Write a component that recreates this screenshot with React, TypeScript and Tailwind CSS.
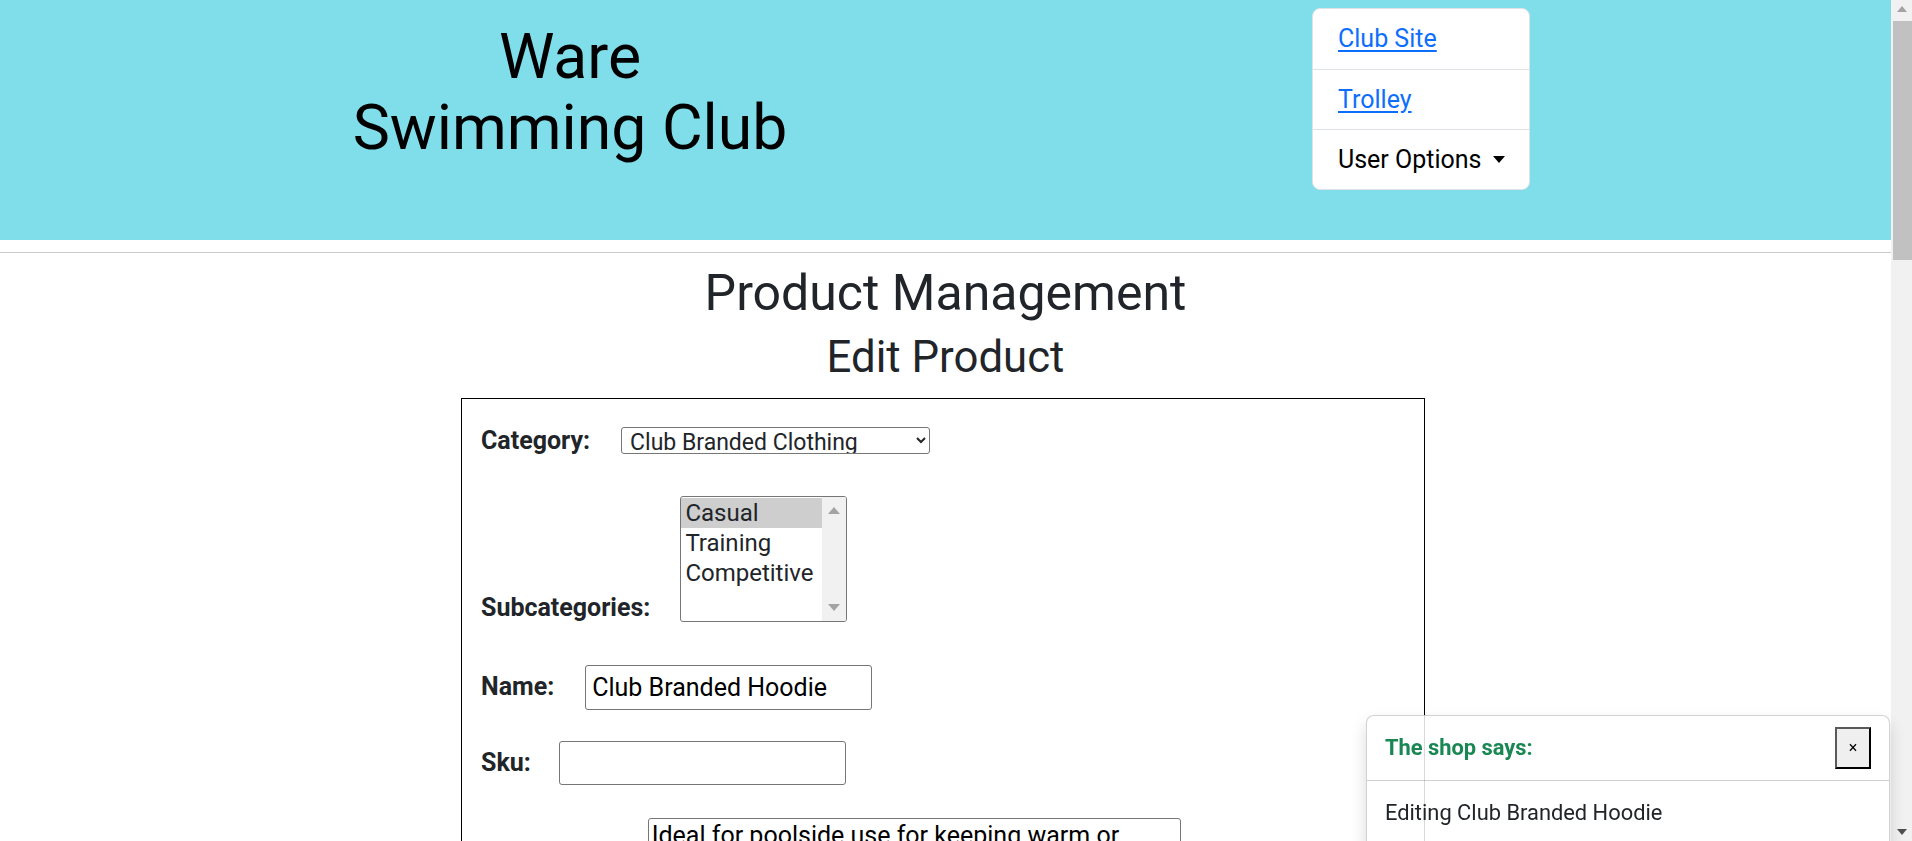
import { useState } from "react";

function ListBox() {
  const options = ["Casual", "Training", "Competitive"];
  const [selected, setSelected] = useState("Casual");

  return (
    <div className="flex w-[167px] h-[126px] border border-[#767676] rounded-[3px] overflow-hidden bg-white">
      <div className="flex-1 pt-px">
        {options.map((opt) => (
          <div
            key={opt}
            onClick={() => setSelected(opt)}
            className={
              opt === selected
                ? "h-[30px] leading-[30px] pl-[4px] text-[24px] bg-[#cecece] cursor-default"
                : "h-[30px] leading-[30px] pl-[4px] text-[24px] cursor-default"
            }
          >
            {opt}
          </div>
        ))}
      </div>
      <div className="w-[24px] bg-[#f1f1f1] flex flex-col items-center justify-between py-[10px]">
        <span className="w-0 h-0 border-x-[6px] border-x-transparent border-b-[7px] border-b-[#a3a3a3]"></span>
        <span className="w-0 h-0 border-x-[6px] border-x-transparent border-t-[7px] border-t-[#a3a3a3]"></span>
      </div>
    </div>
  );
}

function PageScrollbar() {
  return (
    <div className="w-[21px] h-full bg-[#f1f1f1] flex flex-col items-center">
      <div className="h-[18px] flex items-center justify-center">
        <span className="w-0 h-0 border-x-[5.5px] border-x-transparent border-b-[6px] border-b-[#a3a3a3]"></span>
      </div>
      <div className="mt-[3px] ml-[2px] w-[19px] h-[239px] bg-[#c1c1c1]"></div>
      <div className="flex-1"></div>
      <div className="h-[18px] flex items-center justify-center">
        <span className="w-0 h-0 border-x-[5.5px] border-x-transparent border-t-[6px] border-t-[#505050]"></span>
      </div>
    </div>
  );
}

export default function App() {
  const [category, setCategory] = useState("Club Branded Clothing");
  const [name, setName] = useState("Club Branded Hoodie");
  const [sku, setSku] = useState("");
  const [description, setDescription] = useState(
    "Ideal for poolside use for keeping warm or dry after training and galas. Navy hoodie with the club crest embroidered on the front and the club name on the back."
  );
  const [price, setPrice] = useState("32.00");
  const [rating, setRating] = useState("");
  const [showToast, setShowToast] = useState(true);

  return (
    <div className="flex h-[841px] overflow-hidden font-['Roboto','Liberation_Sans',sans-serif] text-[25px] text-[#212529] bg-white">
      <div className="flex-1 min-w-0 overflow-y-auto [scrollbar-width:none] pb-[52px]">
        <header className="bg-[#80deea] h-[240px] flex items-start">
          <div className="w-[1140px] pt-[21px] text-center">
            <h1 className="text-[62.5px] leading-[71px] text-black">
              Ware
              <br />
              Swimming Club
            </h1>
          </div>
          <div className="ml-[172px] mt-[8px] w-[218px] bg-white border border-[#dee2e6] rounded-[8px] overflow-hidden">
            <a href="#" className="h-[60px] px-[25px] flex items-center text-[#0d6efd] underline underline-offset-[3px]">
              Club Site
            </a>
            <a href="#" className="h-[60px] px-[25px] flex items-center border-t border-[#dee2e6] text-[#0d6efd] underline underline-offset-[3px]">
              Trolley
            </a>
            <button className="h-[60px] w-full pl-[25px] flex items-center justify-start gap-[11px] whitespace-nowrap border-t border-[#dee2e6] text-black">
              User Options
              <span className="w-0 h-0 border-x-[6px] border-x-transparent border-t-[7px] border-t-black"></span>
            </button>
          </div>
        </header>

        <hr className="mt-[12px] border-t border-[#c9cacb]" />

        <main>
          <h1 className="mt-[10px] text-center text-[50px] leading-[60px]">Product Management</h1>
          <h2 className="mt-[8px] text-center text-[43.75px] leading-[52.5px]">Edit Product</h2>

          <form className="mt-[14px] w-[964px] ml-[461px] border border-black px-[19px] pt-[27px] pb-[60px]">
            <div className="flex items-center gap-[31px] h-[30px]">
              <label className="font-bold leading-[30px]">Category:</label>
              <select
                value={category}
                onChange={(e) => setCategory(e.target.value)}
                className="w-[309px] h-[27px] border border-[#767676] rounded-[3px] text-[23px] leading-[25px] px-[4px] py-0 bg-white"
              >
                <option>Club Branded Clothing</option>
                <option>Swimwear</option>
                <option>Equipment</option>
                <option>Accessories</option>
              </select>
            </div>

            <div className="mt-[40px] flex items-end gap-[30px]">
              <label className="font-bold leading-[30px] -mb-[1px]">Subcategories:</label>
              <ListBox />
            </div>

            <div className="mt-[43px] flex items-center gap-[31px]">
              <label className="font-bold leading-[30px]">Name:</label>
              <input
                type="text"
                value={name}
                onChange={(e) => setName(e.target.value)}
                className="w-[287px] h-[45px] border border-[#767676] rounded-[3px] px-[6px] text-black"
              />
            </div>

            <div className="mt-[31px] flex items-center gap-[28px]">
              <label className="font-bold leading-[30px]">Sku:</label>
              <input
                type="text"
                value={sku}
                onChange={(e) => setSku(e.target.value)}
                className="w-[287px] h-[44px] border border-[#767676] rounded-[3px] px-[6px] text-black"
              />
            </div>

            <div className="mt-[33px] flex items-end gap-[31px]">
              <label className="font-bold leading-[30px]">Description:</label>
              <textarea
                value={description}
                onChange={(e) => setDescription(e.target.value)}
                rows={6}
                className="w-[533px] border border-[#767676] rounded-[3px] pl-[3px] pr-[38px] py-[2px] leading-[30px] text-black resize-y"
              ></textarea>
            </div>

            <div className="mt-[33px] flex items-center gap-[31px]">
              <label className="font-bold leading-[30px]">Price:</label>
              <input
                type="number"
                value={price}
                onChange={(e) => setPrice(e.target.value)}
                className="w-[287px] h-[44px] border border-[#767676] rounded-[3px] px-[6px] text-black"
              />
            </div>

            <div className="mt-[33px] flex items-center gap-[31px]">
              <label className="font-bold leading-[30px]">Rating:</label>
              <input
                type="number"
                value={rating}
                onChange={(e) => setRating(e.target.value)}
                className="w-[287px] h-[44px] border border-[#767676] rounded-[3px] px-[6px] text-black"
              />
            </div>

            <div className="mt-[33px] flex items-center gap-[31px]">
              <label className="font-bold leading-[30px]">Has sizes:</label>
              <input type="checkbox" className="w-[20px] h-[20px]" defaultChecked />
            </div>

            <div className="mt-[33px] flex flex-col gap-[20px]">
              <label className="font-bold leading-[30px]">Image:</label>
              <div className="w-[400px] h-[400px] border border-[#ced4da] bg-[#f8f9fa] flex items-center justify-center text-[#6c757d] text-[20px]">
                No image selected
              </div>
              <p className="text-[20px]">
                Current Image: <span className="italic">hoodie.jpg</span>
              </p>
              <label className="flex items-center gap-[12px] text-[20px]">
                <input type="checkbox" className="w-[18px] h-[18px]" />
                Remove
              </label>
              <input type="file" className="text-[20px]" />
            </div>

            <div className="mt-[40px] flex justify-end gap-[16px]">
              <a href="#" className="px-[25px] py-[10px] border border-black rounded-[6px] text-black">
                Cancel
              </a>
              <button type="button" className="px-[25px] py-[10px] bg-black text-white rounded-[6px]">
                Update Product
              </button>
            </div>
          </form>
        </main>
      </div>

      <PageScrollbar />

      {showToast && (
        <div className="fixed top-[715px] right-[22px] w-[524px] bg-white/85 border border-black/[0.175] rounded-[8px] shadow-[0_8px_16px_rgba(0,0,0,0.15)]">
          <div className="h-[65px] px-[18px] flex items-center justify-between border-b border-black/[0.175]">
            <strong className="text-[21.875px] text-[#198754]">The shop says:</strong>
            <button
              onClick={() => setShowToast(false)}
              className="w-[36px] h-[42px] border-2 border-t-[#5a5a5a] border-l-[#5a5a5a] border-b-black border-r-black bg-[#efefef] text-[16px] leading-none text-black"
            >
              ×
            </button>
          </div>
          <div className="px-[18px] pt-[16px] pb-[18px] text-[21.875px] text-[#212529]">
            Editing Club Branded Hoodie
          </div>
        </div>
      )}
    </div>
  );
}
